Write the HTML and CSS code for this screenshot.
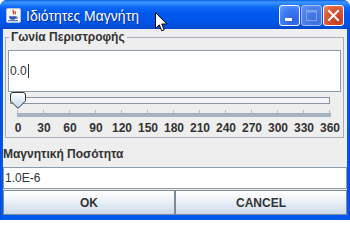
FILE: index.html
```html
<!DOCTYPE html>
<html lang="el">
<head>
<meta charset="utf-8">
<title>Ιδιότητες Μαγνήτη</title>
<link rel="stylesheet" href="styles.css">
</head>
<body>
<div class="window">
  <div class="titlebar">
    <svg class="app-icon" width="15" height="15" viewBox="0 0 15 15">
      <rect x="0.5" y="0.5" width="14" height="14" rx="1.5" fill="#f6f6f2" stroke="#b9c3d6"/>
      <path d="M7.5 1.8c-2 1.6 1.6 2.4 -0.2 4.6M9.4 3.2c-1.2 1 .9 1.6 -.3 3" fill="none" stroke="#e2321c" stroke-width="1.2"/>
      <path d="M3 8.2h7.4c0 2.6-1.6 3.6-3.7 3.6S3 10.8 3 8.2z" fill="#3456b4"/>
      <path d="M10.2 8.8c1.6 0 1.6 1.8 0 1.8" fill="none" stroke="#3456b4" stroke-width="0.9"/>
      <path d="M2 12.8h10" stroke="#3456b4" stroke-width="1.1"/>
    </svg>
    <span class="title">Ιδιότητες Μαγνήτη</span>
    <div class="controls">
      <div class="cbtn min">
        <svg width="19" height="19" viewBox="0 0 19 19"><rect x="5" y="12" width="7" height="3" fill="#ffffff"/></svg>
      </div>
      <div class="cbtn max">
        <svg width="19" height="19" viewBox="0 0 19 19"><rect x="4.5" y="4.5" width="10" height="10" fill="none" stroke="#7fa2ee"/><rect x="4.5" y="4.5" width="10" height="2" fill="#7fa2ee"/></svg>
      </div>
      <div class="cbtn close">
        <svg width="19" height="19" viewBox="0 0 19 19"><path d="M5 5L14 14M14 5L5 14" stroke="#ffffff" stroke-width="2" stroke-linecap="square"/></svg>
      </div>
    </div>
  </div>
  <div class="content">
    <fieldset class="group">
      <legend class="group-title">Γωνία Περιστροφής</legend>
      <div class="field field-big"><span>0.0</span><span class="caret"></span></div>
      <div class="slider">
        <div class="track-area">
          <div class="track"></div>
          <svg class="thumb" width="16" height="17" viewBox="0 0 16 17">
            <defs>
              <linearGradient id="tg" x1="0" y1="0" x2="0" y2="1">
                <stop offset="0" stop-color="#ffffff"/>
                <stop offset="1" stop-color="#c3d5ea"/>
              </linearGradient>
            </defs>
            <path d="M0.5 3Q0.5 0.5 3 0.5H13Q15.5 0.5 15.5 3V9L8 16.3L0.5 9Z" fill="url(#tg)" stroke="#333333"/>
          </svg>
        </div>
        <div class="ticks"></div>
        <div class="tickbar"></div>
        <div class="labels">
          <span>0</span><span>30</span><span>60</span><span>90</span><span>120</span><span>150</span><span>180</span><span>210</span><span>240</span><span>270</span><span>300</span><span>330</span><span>360</span>
        </div>
      </div>
    </fieldset>
    <div class="label">Μαγνητική Ποσότητα</div>
    <div class="field field-small">1.0E-6</div>
    <div class="buttons">
      <div class="btn">OK</div>
      <div class="btn">CANCEL</div>
    </div>
  </div>
  <svg class="cursor" width="13" height="20" viewBox="0 0 13 20">
    <path d="M0.5 0.5V16.5L4.3 12.9L6.8 18.8L9.2 17.8L6.8 12H11.8Z" fill="#ffffff" stroke="#000000" stroke-linejoin="round"/>
  </svg>
</div>
</body>
</html>
```
FILE: styles.css
```css
html, body {
  margin: 0;
  padding: 0;
  background: #ffffff;
}

.window {
  position: relative;
  width: 350px;
  height: 220px;
  display: flex;
  flex-direction: column;
  background: linear-gradient(to right, #0041c6 0, #0058ee 1px, #0058ee 349px, #0041c6 350px);
  border-radius: 7px 7px 0 0;
  overflow: hidden;
  font-family: "Liberation Sans", Arial, sans-serif;
  color: #333333;
}

.titlebar {
  height: 29px;
  flex: none;
  display: flex;
  align-items: center;
  padding: 2px 0 0 6px;
  box-sizing: border-box;
  background: linear-gradient(to bottom,
    #0a5fe0 0px, #3d95ff 2px, #2a86ff 4px, #0f6af5 7px,
    #0058ee 13px, #0055e8 22px, #0050dc 26px, #0046c8 29px);
}

.app-icon {
  flex: none;
  display: block;
}

.title {
  margin-left: 5px;
  color: #ffffff;
  font-size: 14px;
  text-shadow: 1px 1px 0 #0a2a8a;
  white-space: nowrap;
}

.controls {
  margin-left: auto;
  margin-right: 6px;
  display: flex;
  gap: 1px;
}

.cbtn {
  width: 21px;
  height: 21px;
  box-sizing: border-box;
  border: 1px solid #ffffff;
  border-radius: 3px;
}

.cbtn svg {
  display: block;
}

.cbtn.min {
  background: radial-gradient(circle at 70% 75%, #2a63de 0, #3a7af2 55%, #6fa2ff 100%);
}

.cbtn.max {
  border-color: #a6bdf2;
  background: radial-gradient(circle at 70% 75%, #3c6ee0 0, #4c7fe8 60%, #6b96f2 100%);
}

.cbtn.close {
  background: radial-gradient(circle at 70% 75%, #c8391a 0, #dc5430 55%, #f08a66 100%);
}

.content {
  flex: 1;
  margin: 0 3px 5px 3px;
  background: #eeeeee;
  display: flex;
  flex-direction: column;
}

.group {
  margin: 1px 3px 0 2px;
  padding: 0 2px;
  border: 1px solid #a6aeb8;
  min-width: 0;
}

.group-title {
  margin-left: 1px;
  padding: 0 2px;
  font-size: 12px;
  line-height: 14px;
  font-weight: bold;
  color: #333333;
}

.field {
  background: #ffffff;
  border: 1px solid #8e9aa6;
  box-sizing: border-box;
  font-size: 12px;
  color: #333333;
  display: flex;
  align-items: center;
}

.field-big {
  margin-top: 6px;
  height: 42px;
  padding-left: 1px;
}

.caret {
  display: inline-block;
  width: 1px;
  height: 14px;
  margin-left: 1px;
  background: #333333;
}

.slider {
  height: 45px;
}

.track-area {
  position: relative;
  height: 18px;
}

.track {
  position: relative;
  top: 5px;
  margin: 0 11px 0 2px;
  height: 7px;
  box-sizing: border-box;
  border: 1px solid #8a96a3;
  background: #f4f4f4;
}

.thumb {
  position: absolute;
  left: 2px;
  top: 0;
  display: block;
}

.ticks {
  margin-left: 9px;
  width: 314px;
  height: 3px;
  background: repeating-linear-gradient(to right, #b4bcc6 0, #b4bcc6 1px, transparent 1px, transparent 26px);
}

.tickbar {
  margin-left: 9px;
  width: 314px;
  height: 4px;
  background: #a7b2bf;
}

.labels {
  margin: 4px 0 0 -3px;
  display: grid;
  grid-template-columns: repeat(13, 26px);
  font-size: 12px;
  line-height: 14px;
  font-weight: bold;
  color: #333333;
  text-align: center;
  white-space: nowrap;
}

.label {
  margin-top: 8px;
  font-size: 12px;
  line-height: 16px;
  font-weight: bold;
  color: #333333;
}

.field-small {
  margin-top: 5px;
  height: 22px;
  padding-left: 1px;
}

.buttons {
  margin-top: 1px;
  display: flex;
  height: 25px;
}

.btn {
  flex: 1;
  box-sizing: border-box;
  border: 1px solid #7a8a99;
  background: linear-gradient(to bottom, #ffffff 0%, #f2f6fa 30%, #dde7f1 70%, #c9d8e8 100%);
  display: flex;
  align-items: center;
  justify-content: center;
  font-size: 12px;
  font-weight: bold;
  color: #333333;
}

.cursor {
  position: absolute;
  left: 155px;
  top: 12px;
  display: block;
}
```
